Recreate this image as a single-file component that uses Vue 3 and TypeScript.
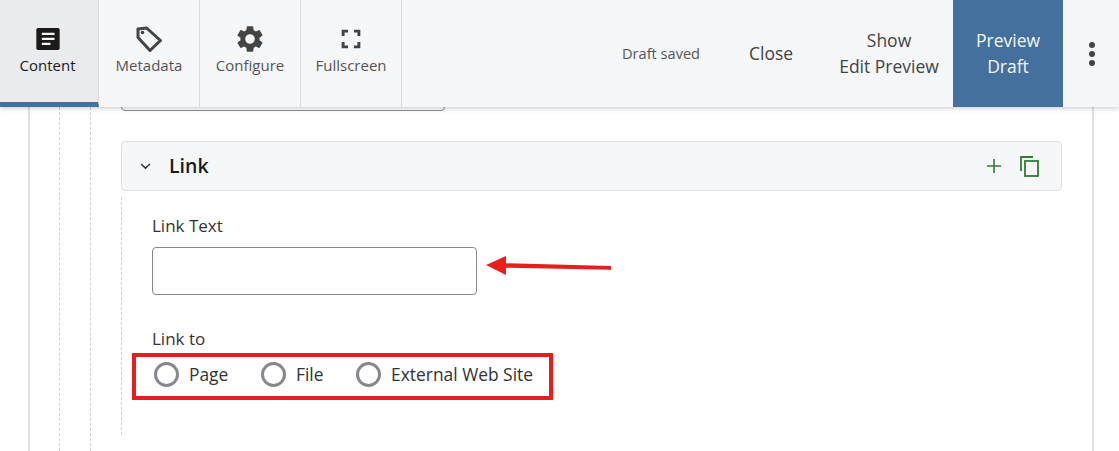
<script setup lang="ts">
const tabs = [
  { key: "content", label: "Content", active: true },
  { key: "metadata", label: "Metadata", active: false },
  { key: "configure", label: "Configure", active: false },
  { key: "fullscreen", label: "Fullscreen", active: false },
];
const linkOptions = ["Page", "File", "External Web Site"];
</script>

<template>
  <div class="page">
    <header class="toolbar">
      <nav class="tabs">
        <button v-for="tab in tabs" :key="tab.key" class="tab" :class="{ active: tab.active }">
          <svg v-if="tab.key === 'content'" class="tab-icon" viewBox="0 0 24 24">
            <path fill="#1a1a1a" d="M2 4A1.500 1.500 0 0 1 3.500 2.500h17A1.500 1.500 0 0 1 22 4v16a1.500 1.500 0 0 1-1.500 1.500h-17A1.500 1.500 0 0 1 2 20z" />
            <path fill="#f4f4f4" d="M6.700 6.600h10.900v2H6.700zM6.700 10.900h10.900v2H6.700zM6.700 15.200h7.400v2H6.700z" />
          </svg>
          <svg v-else-if="tab.key === 'metadata'" class="tab-icon" viewBox="0 0 28 28">
            <path fill="none" stroke="#444" stroke-width="3" stroke-linejoin="round" d="M3 4 11.500 3 25.500 15.500 15 25.500 3 12.500z" />
            <circle cx="7.500" cy="7.500" r="1.800" fill="#444" />
          </svg>
          <svg v-else-if="tab.key === 'configure'" class="tab-icon gear" viewBox="0 0 24 24">
            <path fill="#444" d="M19.140 12.940c.04-.3.060-.61.060-.94s-.02-.64-.07-.94l2.030-1.580a.49.490 0 0 0 .12-.61l-1.920-3.320a.49.490 0 0 0-.59-.22l-2.390.96a7 7 0 0 0-1.620-.94l-.36-2.540a.48.480 0 0 0-.48-.41h-3.840a.48.480 0 0 0-.47.410l-.36 2.540c-.59.240-1.130.570-1.620.94l-2.390-.96a.49.490 0 0 0-.59.220L2.740 8.870a.48.480 0 0 0 .12.610l2.030 1.580c-.05.300-.09.630-.09.940s.02.640.07.940l-2.030 1.580a.49.490 0 0 0-.12.610l1.920 3.320c.12.220.37.290.59.220l2.390-.96c.5.380 1.030.7 1.620.94l.36 2.540c.05.240.24.410.48.410h3.840c.24 0 .44-.17.470-.41l.36-2.540c.59-.24 1.130-.56 1.620-.94l2.390.96c.22.080.47 0 .59-.22l1.920-3.320a.48.480 0 0 0-.12-.61zM12 15.600A3.600 3.600 0 1 1 12 8.400a3.600 3.600 0 0 1 0 7.200z" />
          </svg>
          <svg v-else class="tab-icon" viewBox="0 0 24 24">
            <path fill="#444" d="M4 4h5.500v2.500H6.500v3H4zM14.500 4H20v5.500h-2.500v-3h-3zM4 14.500h2.500v3h3V20H4zM17.500 14.500H20V20h-5.500v-2.500h3z" />
          </svg>
          <span>{{ tab.label }}</span>
        </button>
      </nav>
      <div class="actions">
        <span class="saved">Draft saved</span>
        <button class="action close">Close</button>
        <button class="action show">Show<br />Edit Preview</button>
        <button class="preview">Preview<br />Draft</button>
        <button class="more" aria-label="More">
          <i></i><i></i><i></i>
        </button>
      </div>
    </header>

    <main class="outer">
      <div class="guide first">
        <div class="guide">
          <div class="body">
            <div class="prev-field"></div>
            <section class="panel">
              <svg class="chevron" viewBox="0 0 12 8">
                <path fill="none" stroke="#333" stroke-width="1.700" d="M1 1.200 6 6l5-4.800" />
              </svg>
              <h2>Link</h2>
              <div class="panel-tools">
                <svg class="plus" viewBox="0 0 14 14">
                  <path fill="none" stroke="#2e7d32" stroke-width="1.600" d="M7 0v14M0 7h14" />
                </svg>
                <svg class="copy" viewBox="0 0 19 21">
                  <path fill="none" stroke="#2e7d32" stroke-width="1.800" d="M13 1H1v14" />
                  <rect x="5" y="5" width="13" height="15" fill="none" stroke="#2e7d32" stroke-width="1.800" />
                </svg>
              </div>
            </section>
            <div class="fields">
              <label class="field-label">Link Text</label>
              <input class="text-input" type="text" />
              <div class="field-label second">Link to</div>
              <div class="radios">
                <label v-for="opt in linkOptions" :key="opt" class="radio">
                  <span class="ring"></span>
                  <span>{{ opt }}</span>
                </label>
              </div>
            </div>
          </div>
        </div>
      </div>
    </main>

    <svg class="arrow" viewBox="0 0 130 20">
      <path fill="#e61e1e" d="M3 10 23 1v7.300L128 11v3.700L23 12.700V20z" />
    </svg>
    <div class="highlight"></div>
  </div>
</template>

<style>
html,
body {
  margin: 0;
  background: #fff;
}
</style>

<style scoped>
.page {
  position: relative;
  width: 1119px;
  height: 451px;
  overflow: hidden;
  font-family: "Open Sans", "Liberation Sans", sans-serif;
  color: #333;
  background: #fff;
}

button {
  font-family: inherit;
  border: none;
  background: none;
  padding: 0;
  color: inherit;
}

.toolbar {
  position: relative;
  z-index: 2;
  display: flex;
  justify-content: space-between;
  height: 107px;
  background: #f6f7f9;
  box-shadow: 0 1px 5px rgba(40, 50, 70, 0.28);
}

.tabs {
  display: flex;
}

.tab {
  display: flex;
  flex-direction: column;
  align-items: center;
  box-sizing: border-box;
  width: 101px;
  height: 107px;
  padding-top: 25px;
  border-right: 1px solid #d8dbe2;
  font-size: 15px;
  line-height: 19px;
  color: #555;
}

.tab:first-child {
  width: 99px;
  padding-right: 3px;
  background: #e9ebee;
  border-bottom: 5px solid #44709d;
  color: #1a1a1a;
}

.tab-icon {
  width: 28px;
  height: 28px;
  margin-bottom: 3px;
}

.tab-icon.gear {
  width: 32px;
  height: 32px;
  margin: -2px 0 1px;
}

.actions {
  display: flex;
  align-items: center;
}

.saved {
  width: 78px;
  margin-right: 49px;
  font-size: 14.600px;
  white-space: nowrap;
  color: #555;
  position: relative;
  top: -1px;
}

.action {
  padding-bottom: 2px;
  font-size: 17.500px;
  line-height: 26px;
  color: #444;
  text-align: center;
}

.close {
  width: 44px;
  margin-right: 45px;
}

.show {
  width: 102px;
  margin-right: 13px;
  white-space: nowrap;
}

.preview {
  width: 110px;
  height: 107px;
  padding-bottom: 2px;
  background: #44709d;
  color: #f4f6f9;
  font-size: 17.500px;
  font-weight: 500;
  line-height: 26px;
}

.more {
  display: flex;
  flex-direction: column;
  align-items: center;
  gap: 3px;
  width: 58px;
  margin-right: -2px;
}

.more i {
  width: 6px;
  height: 6px;
  border-radius: 50%;
  background: #444;
}

.outer {
  box-sizing: border-box;
  width: 1066px;
  height: 344px;
  margin-left: 28px;
  padding-left: 29px;
  border-left: 2px solid #dfe1e7;
  border-right: 2px solid #dfe1e7;
}

.guide {
  box-sizing: border-box;
  height: 100%;
  padding-left: 30px;
  border-left: 1px dashed #d0d2d6;
}

.body {
  display: flow-root;
  width: 941px;
}

.prev-field {
  box-sizing: border-box;
  width: 324px;
  height: 15px;
  margin-top: -11px;
  border: 1px solid #8a8d93;
  border-radius: 4px;
}

.panel {
  display: flex;
  align-items: center;
  box-sizing: border-box;
  width: 941px;
  height: 50px;
  margin-top: 30px;
  padding: 0 22px 0 18px;
  border: 1px solid #dcdfe5;
  border-radius: 4px;
  background: #f6f7f9;
}

.chevron {
  width: 11px;
  height: 7px;
  margin-right: 18px;
}

.panel h2 {
  margin: 0;
  font-size: 19.500px;
  font-weight: 600;
  line-height: 28px;
  color: #1a1a1a;
}

.panel-tools {
  display: flex;
  align-items: center;
  gap: 19px;
  margin-left: auto;
}

.plus {
  width: 14px;
  height: 14px;
}

.copy {
  width: 19px;
  height: 21px;
}

.fields {
  box-sizing: border-box;
  height: 238px;
  margin-top: 6px;
  padding: 17px 0 0 30px;
  border-left: 1px dashed #d0d2d6;
}

.field-label {
  display: block;
  font-size: 17px;
  line-height: 23px;
  color: #333;
}

.field-label.second {
  margin-top: 32px;
}

.text-input {
  display: block;
  box-sizing: border-box;
  width: 325px;
  height: 48px;
  margin-top: 10px;
  border: 1px solid #85888e;
  border-radius: 4px;
  background: #fff;
}

.radios {
  display: flex;
  margin-top: 11px;
  margin-left: 2px;
  font-size: 17.400px;
  line-height: 26px;
  color: #333;
}

.radio {
  display: flex;
  align-items: center;
  gap: 10px;
  margin-right: 32.600px;
}

.ring {
  box-sizing: border-box;
  width: 25px;
  height: 25px;
  border: 3px solid #85888e;
  border-radius: 50%;
}

.arrow {
  position: absolute;
  left: 483px;
  top: 255px;
  width: 130px;
  height: 20px;
}

.highlight {
  position: absolute;
  left: 132px;
  top: 353px;
  width: 421px;
  height: 47px;
  box-sizing: border-box;
  border: 4px solid #e61e1e;
}
</style>
